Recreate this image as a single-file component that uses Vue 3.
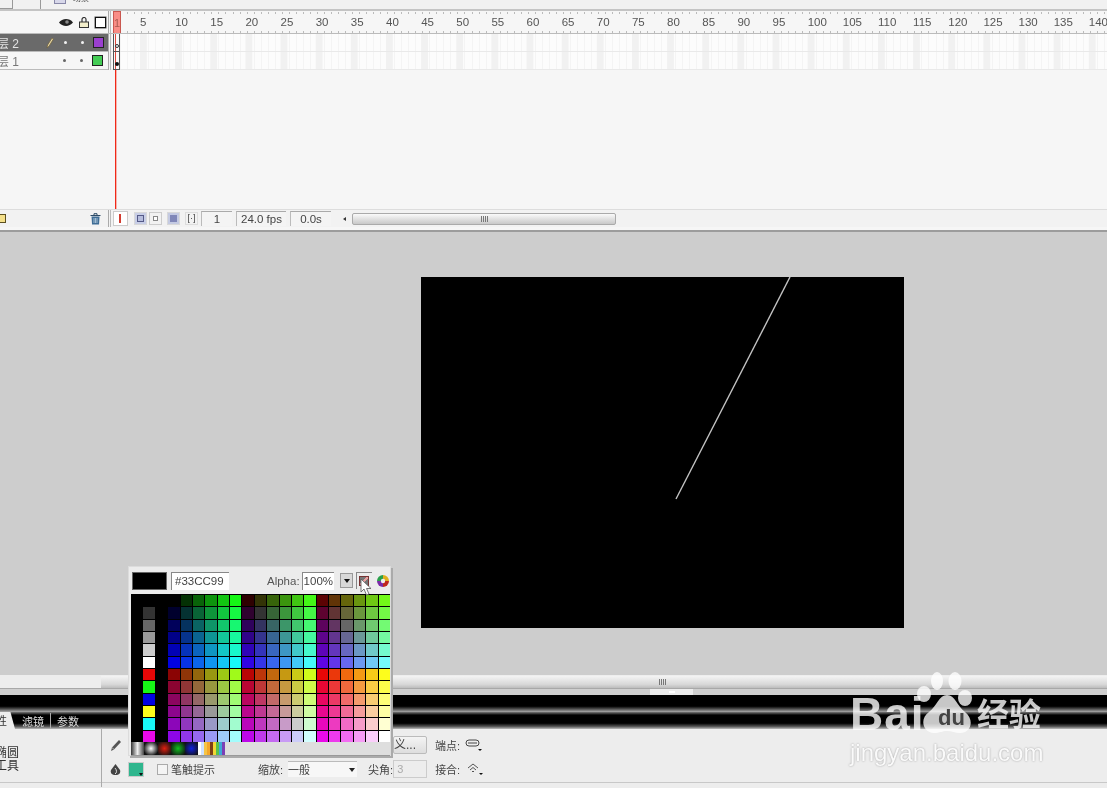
<script setup>
const labels = [5,10,15,20,25,30,35,40,45,50,55,60,65,70,75,80,85,90,95,100,105,110,115,120,125,130,135,140]
const levels = ['00','33','66','99','CC','FF']
const stripColors = ['#000000','#333333','#666666','#999999','#CCCCCC','#FFFFFF','#FF0000','#00FF00','#0000FF','#FFFF00','#00FFFF','#FF00FF']
const cells = []
for (let row = 0; row < 12; row++) {
  const half = row < 6 ? 0 : 3
  const blue = levels[row % 6]
  cells.push('#000000', stripColors[row], '#000000')
  for (let block = 0; block < 3; block++) {
    for (let g = 0; g < 6; g++) cells.push('#' + levels[block + half] + levels[g] + blue)
  }
}
const rainbow = ['#ffffff','#cfe2ff','#f6c445','#f4a62a','#7d3f16','#f1d635','#57c04a','#3fa7d6','#7b3fb5']
</script>

<template>
  <div class="app">
    <header class="topbar">
      <span class="tb-cell one"></span>
      <span class="tb-cell two"></span>
      <span class="scene-icon"></span>
      <span class="scene-text">场景</span>
    </header>

    <section class="timeline">
      <div class="tl-head">
        <div class="layers-head">
          <svg class="i-eye" viewBox="0 0 14 9"><path d="M0 4.500C3 .5 10 -.5 14 4.500 10 9.500 3 8.500 0 4.500Z" fill="#222"/><circle cx="8" cy="4" r="1.800" fill="#888"/></svg>
          <svg class="i-lock" viewBox="0 0 10 11"><path d="M3 5V2.500a2 2 0 0 1 4 0V5" fill="none" stroke="#333" stroke-width="1.200"/><rect x=".5" y="5" width="9" height="5.500" fill="#f3eecb" stroke="#333"/></svg>
          <span class="i-box"></span>
        </div>
        <div class="split"></div>
        <div class="ruler">
          <span class="head-marker">1</span>
          <span v-for="n in labels" :key="n" class="tick-label">{{ n }}</span>
        </div>
      </div>

      <div class="tl-rows">
        <div class="layers">
          <div class="layer selected">
            <span class="layer-name">层 2</span>
            <svg class="i-pencil" viewBox="0 0 8 12"><path d="M1 11 1.600 8 6 1l1.500 1-4.400 7Z" fill="#e9d9a6" stroke="#6b5d3a" stroke-width=".7"/></svg>
            <span class="dot d1"></span><span class="dot d2"></span>
            <span class="chip purple"></span>
          </div>
          <div class="layer">
            <span class="layer-name">层 1</span>
            <span class="dot d1 gap"></span><span class="dot d2"></span>
            <span class="chip green"></span>
          </div>
        </div>
        <div class="split"></div>
        <div class="frames">
          <div class="frame-row"><span class="kf hollow"></span></div>
          <div class="frame-row"><span class="kf solid"></span></div>
        </div>
      </div>

      <div class="tl-status">
        <div class="status-left">
          <span class="folder"></span>
          <svg class="i-trash" viewBox="0 0 11 12"><path d="M.5 2.500h10M4 2V.7h3V2" fill="none" stroke="#2c4a66"/><path d="M1.500 3.500h8L9 11.500H2Z" fill="#3f6d96"/><path d="M4 5v5M5.500 5v5M7 5v5" stroke="#cfe0ee" stroke-width=".7"/></svg>
        </div>
        <div class="split"></div>
        <div class="status-right">
          <span class="st-btn center"><i></i></span>
          <span class="st-btn onion a"></span>
          <span class="st-btn onion b"></span>
          <span class="st-btn onion c"></span>
          <span class="st-btn bracket">[·]</span>
          <span class="field f1">1</span>
          <span class="field f2">24.0 fps</span>
          <span class="field f3">0.0s</span>
          <span class="arrow-left"></span>
          <div class="h-scroll"><span class="grip"></span></div>
        </div>
      </div>
    </section>

    <main class="stage">
      <div class="canvas">
        <svg class="canvas-line" viewBox="0 0 483 351"><path d="M369 0 255 222" stroke="#c4c4c4" stroke-width="1.400" fill="none"/></svg>
      </div>
    </main>

    <div class="stage-scroll"><span class="grip"></span></div>
    <div class="collapse-strip"><span class="collapse-handle"><i></i></span></div>

    <div class="black-band"></div>
    <div class="black-band second">
      <div class="tabs">
        <span class="tab active">性</span>
        <span class="tab">滤镜</span>
        <span class="tab last">参数</span>
      </div>
    </div>

    <section class="props">
      <div class="tool-name"><span>椭圆</span><span>工具</span></div>
      <div class="prop-controls">
        <div class="prop-row top">
          <svg class="i-pen" viewBox="0 0 12 13"><path d="M1 12 2 8.500 9 1l2 2-7 7.500Z" fill="#555"/><path d="M2 8.500 4 10.500" stroke="#eee" stroke-width=".7"/></svg>
          <span class="custom-btn">义...</span>
          <span class="lab endcap">端点:</span>
          <svg class="i-cap" viewBox="0 0 18 12"><rect x="1" y="1" width="13" height="6" rx="3" fill="none" stroke="#444"/><path d="M3 4h9" stroke="#444"/><path d="M13 10h4l-2 2Z" fill="#111"/></svg>
        </div>
        <div class="prop-row bottom">
          <svg class="i-fill" viewBox="0 0 13 13"><path d="M6.500 1 11 7c1 3-1 5-4.500 5S1 10 2 7Z" fill="#444"/><path d="M6 5c2 2 2 5 0 6" stroke="#ddd" fill="none"/></svg>
          <span class="swatch"><i></i></span>
          <span class="check"></span>
          <span class="lab hint">笔触提示</span>
          <span class="lab scale">缩放:</span>
          <span class="select">一般<i></i></span>
          <span class="lab miter">尖角:</span>
          <span class="miter-input">3</span>
          <span class="lab join">接合:</span>
          <svg class="i-join" viewBox="0 0 18 14"><path d="M2 6 7 2l5 4M4 8l3-2.500L10 8M6 10l1-1 1 1" fill="none" stroke="#555"/><path d="M13 11h4l-2 2Z" fill="#111"/></svg>
        </div>
      </div>
    </section>

    <div class="picker">
      <div class="picker-top">
        <span class="current"></span>
        <span class="hex">#33CC99</span>
        <span class="alpha-label">Alpha:</span>
        <span class="alpha">100%</span>
        <span class="alpha-drop"><i></i></span>
        <span class="nofill"><b></b></span>
        <svg class="wheel" viewBox="0 0 12 12">
          <path d="M6 6 6 0A6 6 0 0 1 12 6Z" fill="#e0b020"/><path d="M6 6 12 6A6 6 0 0 1 6 12Z" fill="#c0281e"/>
          <path d="M6 6 6 12A6 6 0 0 1 0 6Z" fill="#7a2aa8"/><path d="M6 6 0 6A6 6 0 0 1 6 0Z" fill="#28a04a"/>
          <circle cx="6" cy="6" r="2.200" fill="#eee"/>
        </svg>
      </div>
      <div class="palette">
        <i v-for="(c, i) in cells" :key="i" :style="{ background: c }"></i>
      </div>
      <div class="gradients">
        <i class="g-gray"></i><i class="g-radial"></i><i class="g-red"></i><i class="g-green"></i><i class="g-blue"></i>
        <span class="g-rainbow"><b v-for="c in rainbow" :key="c" :style="{ background: c }"></b></span>
      </div>
    </div>
    <svg class="cursor" viewBox="0 0 12 18"><path d="M1 1v13l3-3 2.500 6 2.500-1-2.500-5.500H11Z" fill="#fff" stroke="#555" stroke-width=".8"/></svg>

    <div class="playhead"></div>

    <div class="watermark">
      <div class="wm-top">
        <span class="wm-bai">Bai</span>
        <svg class="wm-paw" viewBox="0 0 56 63">
          <ellipse cx="20" cy="10" rx="6" ry="9"/><ellipse cx="38" cy="10" rx="6.500" ry="9"/>
          <ellipse cx="7" cy="23" rx="7" ry="8"/><ellipse cx="48" cy="27" rx="7" ry="8"/>
          <path d="M30 24C22 24 20 35 12 41 2 48 6 62 17 62 23 62 25 60 30 60 35 60 38 62 43 62 54 62 58 49 48 41 40 35 38 24 30 24Z"/>
        </svg>
        <span class="wm-du">du</span>
        <span class="wm-cn">经验</span>
      </div>
      <div class="wm-url">jingyan.baidu.com</div>
    </div>
  </div>
</template>

<style scoped>
.app {
  position: relative;
  width: 1107px;
  height: 788px;
  overflow: hidden;
  display: flex;
  flex-direction: column;
  background: #ededed;
  font-family: "Liberation Sans", "Noto Sans CJK SC", sans-serif;
  color: #444;
  font-size: 11px;
  filter: blur(0.4px);
}

/* top strip */
.topbar {
  height: 9px;
  flex: none;
  display: flex;
  align-items: flex-end;
  background: #f1f1f1;
  border-bottom: 2px solid #c4c4c4;
  overflow: hidden;
}
.tb-cell { display: block; height: 9px; border-right: 1px solid #999; }
.tb-cell.one { width: 12px; border-bottom: 1px solid #999; }
.tb-cell.two { width: 27px; margin-right: 13px; }
.scene-icon { width: 10px; height: 4px; margin-bottom: 5px; background: #d8d8ea; border: 1px solid #8888a8; }
.scene-text { align-self: flex-start; margin: -7px 0 0 7px; font-size: 8px; line-height: 11px; }

/* timeline */
.timeline { height: 219px; flex: none; display: flex; flex-direction: column; background: #f6f6f6; border-bottom: 2px solid #9c9c9c; }
.tl-head { height: 22px; flex: none; display: flex; border-bottom: 1px solid #bbb; }
.layers-head { width: 108px; flex: none; display: flex; align-items: center; }
.i-eye { width: 14px; height: 9px; margin-left: 59px; }
.i-lock { width: 10px; height: 11px; margin-left: 6px; }
.i-box { width: 9px; height: 9px; margin-left: 6px; border: 1px solid #111; background: #fff; box-shadow: 0 0 0 .5px #555; }
.split { width: 3px; flex: none; box-sizing: border-box; border-left: 1px solid #aaa; border-right: 1px solid #bbb; background: #f2f2f2; }
.ruler {
  flex: 1;
  display: flex;
  overflow: hidden;
  position: relative;
  padding-left: 29px;
  background-image:
    repeating-linear-gradient(90deg, #bbb 0 1px, transparent 1px 7.03px),
    repeating-linear-gradient(90deg, #bbb 0 1px, transparent 1px 7.03px);
  background-size: 100% 2px, 100% 2px;
  background-position: 2px 1px, 2px bottom;
  background-repeat: no-repeat;
}
.head-marker {
  position: absolute;
  left: 2px;
  top: 0;
  width: 6px;
  height: 21px;
  background: #f98d86;
  border: 1px solid #c9574f;
  color: #a85a50;
  font-size: 11px;
  line-height: 22px;
  text-align: center;
}
.tick-label { flex: 0 0 35.15px; font-size: 11.500px; line-height: 23px; color: #555; white-space: nowrap; }

.tl-rows { flex: none; height: 36px; display: flex; position: relative; }
.layers { width: 108px; flex: none; }
.layer { height: 18px; position: relative; display: flex; align-items: center; border-bottom: 1px solid #bbb; box-sizing: border-box; color: #777; }
.layer.selected { background: #6a6a6a; color: #e4e4e4; }
.layer-name { margin-left: -3px; font-size: 12px; width: 49px; white-space: nowrap; }
.i-pencil { width: 8px; height: 12px; }
.dot { width: 3px; height: 3px; border-radius: 50%; background: #666; }
.selected .dot { background: #f2f2f2; }
.dot.d1 { margin-left: 10px; }
.dot.gap { margin-left: 17px; }
.dot.d2 { margin-left: 14px; }
.chip { width: 9px; height: 9px; margin-left: 9px; border: 1px solid #222; }
.chip.purple { background: #9a3fcf; }
.chip.green { background: #44cc55; }
.frames { flex: 1; position: relative; overflow: hidden; }
.frame-row {
  height: 18px;
  box-sizing: border-box;
  border-bottom: 1px solid #e9e9e9;
  background-color: #fcfcfc;
  background-image:
    linear-gradient(90deg, #f1f1f1 0 7px, transparent 7px),
    repeating-linear-gradient(90deg, #f4f4f4 0 1px, transparent 1px 7.03px);
  background-size: 35.15px 100%, 100% 100%;
  background-position: 29px 0, 2px 0;
  position: relative;
}
.kf {
  position: absolute;
  left: 2px;
  top: 0;
  width: 5px;
  height: 17px;
  background: #fafafa linear-gradient(90deg, transparent 1px, #e0483c 1px 2px, transparent 2px);
  border: 1px solid #555;
  border-top: 0;
}
.kf::after { content: ""; position: absolute; left: .5px; top: 10px; width: 4px; height: 4px; border-radius: 50%; box-sizing: border-box; }
.kf.hollow::after { border: 1px solid #333; background: #fff; }
.kf.solid::after { background: #111; }

.tl-status { flex: none; height: 17px; display: flex; background: #f2f2f2; border-top: 1px solid #ddd; margin-top: 139px; }
.status-left { width: 108px; flex: none; display: flex; align-items: center; justify-content: space-between; padding-right: 7px; box-sizing: border-box; }
.folder { width: 5px; height: 7px; background: #f5e08a; border: 1px solid #5c5020; border-left: 0; }
.i-trash { width: 11px; height: 12px; }
.status-right { flex: 1; display: flex; align-items: center; }
.st-btn { flex: none; display: block; width: 13px; height: 13px; position: relative; box-sizing: border-box; }
.st-btn.center { width: 15px; height: 15px; margin-left: 2px; border: 1px solid #ccc; background: #fff; }
.st-btn.center i { position: absolute; left: 5px; top: 2px; width: 2px; height: 9px; background: #d23c30; }
.onion.a { margin-left: 6px; background: #b6bddd; border: 1px solid #d8d8d8; box-shadow: inset 0 0 0 2px #c8cee6, inset 0 0 0 3px #555a88; }
.onion.b { margin-left: 2px; background: #fff; border: 1px solid #ccc; box-shadow: inset 0 0 0 3px #f2f2f2, inset 0 0 0 4px #888; }
.onion.c { margin-left: 5px; background: #8087b8; border: 1px solid #d8d8d8; box-shadow: inset 0 0 0 2px #c4cae2; }
.bracket { margin-left: 5px; border: 1px solid #ddd; font-size: 9px; line-height: 11px; text-align: center; color: #444; white-space: nowrap; }
.field { flex: none; height: 15px; box-sizing: border-box; background: #f4f4f4; border-top: 1px solid #aaa; border-left: 1px solid #bbb; font-size: 11.500px; line-height: 14px; text-align: center; color: #444; }
.f1 { width: 31px; margin-left: 3px; }
.f2 { width: 50px; margin-left: 4px; }
.f3 { width: 41px; margin-left: 4px; }
.arrow-left { flex: none; width: 0; height: 0; margin-left: 12px; border: 2.500px solid transparent; border-right: 3px solid #333; border-left: 0; }
.h-scroll { flex: none; width: 264px; height: 12px; margin-left: 6px; display: flex; align-items: center; justify-content: center; box-sizing: border-box; border: 1px solid #aaa; border-radius: 2px; background: linear-gradient(#fafafa, #dcdcdc 60%, #c8c8c8); }
.grip { display: block; width: 7px; height: 6px; background: repeating-linear-gradient(90deg, #777 0 1px, transparent 1px 2px); }

/* stage */
.stage { height: 443px; flex: none; background: #cdcdcd; display: flex; align-items: flex-start; padding: 45px 0 0 421px; box-sizing: border-box; }
.canvas { width: 483px; height: 351px; background: #000; }
.canvas-line { display: block; width: 483px; height: 351px; }

.stage-scroll { height: 13px; flex: none; margin-left: 101px; display: flex; align-items: center; justify-content: center; padding-left: 116px; background: linear-gradient(#f4f4f4, #d8d8d8 70%, #bdbdbd); border-top: 1px solid #eee; box-sizing: border-box; }
.collapse-strip { height: 7px; flex: none; background: #cfcfcf; border-top: 1px solid #a8a8a8; box-sizing: border-box; display: flex; justify-content: flex-start; padding-left: 650px; }
.collapse-handle { width: 43px; height: 6px; background: #ececec; display: flex; justify-content: center; align-items: center; }
.collapse-handle i { width: 6px; height: 2px; background: #fff; }
.black-band { height: 17px; flex: none; background: linear-gradient(#000 0 66%, #444 80%, #aaa 100%); }
.black-band.second { height: 17px; background: linear-gradient(#777, #000 18% 66%, #555 85%, #bbb); position: relative; }
.tabs { display: flex; height: 17px; align-items: center; color: #ddd; font-size: 11px; }
.tab { padding: 0 6px; }
.tab.active { width: 19px; height: 17px; padding: 0; box-sizing: border-box; background: #ededed; color: #333; clip-path: polygon(0 0, 76% 0, 100% 100%, 0 100%); margin: 0 7px 0 -4px; line-height: 19px; }
.tab:not(.active):not(.last) { border-right: 1px solid #aaa; padding: 0 6px 0 0; }

/* property inspector */
.props { flex: 1; display: flex; position: relative; border-bottom: 1px solid #c8c8c8; margin-bottom: 5px; }
.tool-name { width: 107px; flex: none; display: flex; flex-direction: column; padding-top: 18px; margin-left: -5px; box-sizing: border-box; border-right: 1px solid #aaa; font-size: 12px; line-height: 13px; color: #333; margin-bottom: -5px; white-space: nowrap; }
.prop-controls { flex: 1; display: flex; flex-direction: column; }
.prop-row { display: flex; align-items: center; height: 24px; flex: none; }
.prop-row.top { margin-top: 4px; }
.i-pen { width: 12px; height: 13px; margin-left: 8px; flex: none; }
.custom-btn { flex: none; width: 34px; height: 18px; margin-left: 271px; box-sizing: border-box; border: 1px solid #bbb; border-radius: 2px; background: linear-gradient(#f4f4f4, #ddd); line-height: 16px; color: #444; font-size: 12px; }
.lab { flex: none; font-size: 11px; color: #444; white-space: nowrap; }
.endcap { margin-left: 8px; }
.i-cap { width: 18px; height: 12px; margin-left: 5px; flex: none; }
.i-fill { width: 13px; height: 13px; margin-left: 7px; flex: none; }
.swatch { flex: none; width: 16px; height: 15px; margin-left: 6px; background: #2fb68e; border: 1px solid #ccc; box-sizing: border-box; position: relative; }
.swatch i { position: absolute; right: 0; bottom: 0; border: 2.500px solid transparent; border-top: 3px solid #111; border-bottom: 0; }
.check { flex: none; width: 11px; height: 11px; margin-left: 13px; background: #f4f4f4; border: 1px solid #aaa; box-sizing: border-box; }
.hint { margin-left: 3px; }
.scale { margin-left: 43px; }
.select { flex: none; width: 69px; height: 16px; margin-left: 5px; position: relative; line-height: 16px; font-size: 11px; background: #f7f7f7; border-top: 1px solid #bbb; box-sizing: border-box; }
.select i { position: absolute; right: 2px; top: 6px; border: 3.500px solid transparent; border-top: 4px solid #222; border-bottom: 0; }
.miter { margin-left: 11px; }
.miter-input { flex: none; width: 34px; height: 18px; margin-left: 0; box-sizing: border-box; padding-left: 3px; border: 1px solid #ccc; color: #aaa; line-height: 16px; }
.join { margin-left: 8px; }
.i-join { width: 18px; height: 14px; margin-left: 6px; flex: none; }

/* colour picker popup */
.picker {
  position: absolute;
  left: 128px;
  top: 566px;
  width: 263px;
  height: 190px;
  box-sizing: border-box;
  padding: 0 0 0 2px;
  background: #ececec;
  border: 1px solid #dcdcdc;
  box-shadow: 2px 2px 0 #aaa;
}
.picker-top { height: 27px; display: flex; align-items: center; padding-left: 1px; }
.current { flex: none; width: 35px; height: 18px; background: #000; border: 1px solid #666; box-sizing: border-box; }
.hex { flex: none; width: 58px; height: 18px; margin-left: 4px; background: #fff; border-top: 1px solid #888; border-left: 1px solid #888; box-sizing: border-box; padding-left: 3px; line-height: 17px; font-size: 11.500px; color: #444; }
.alpha-label { flex: none; margin-left: 38px; font-size: 11.500px; color: #555; }
.alpha { flex: none; width: 32px; height: 18px; margin-left: 2px; background: #fff; border-top: 1px solid #888; border-left: 1px solid #888; box-sizing: border-box; line-height: 17px; font-size: 11.500px; color: #444; padding-left: 1px; white-space: nowrap; overflow: hidden; }
.alpha-drop { flex: none; width: 13px; height: 15px; margin-left: 6px; background: #d8d8d8; border: 1px solid #999; box-sizing: border-box; position: relative; }
.alpha-drop i { position: absolute; left: 3px; top: 5px; border: 3px solid transparent; border-top: 4px solid #111; border-bottom: 0; }
.nofill { flex: none; width: 16px; height: 17px; margin-left: 3px; border-top: 1px solid #888; border-left: 1px solid #888; box-sizing: border-box; display: flex; align-items: center; justify-content: center; }
.nofill b { display: block; width: 8px; height: 8px; background: linear-gradient(135deg, #777 0 40%, #e8a0a0 40% 60%, #777 60%); border: 1px solid #733; }
.wheel { flex: none; width: 12px; height: 12px; margin-left: 5px; }
.palette {
  display: grid;
  grid-template-columns: repeat(21, 1fr);
  grid-auto-rows: 1fr;
  gap: 1px;
  width: 259px;
  height: 148px;
  padding: 1px 0 0 0;
  box-sizing: border-box;
  background: #000;
  filter: saturate(.88);
}
.palette i { display: block; }
.gradients { height: 13px; width: 259px; display: flex; background: #dedede; border-bottom: 1px solid #999; }
.gradients i { width: 13.400px; flex: none; display: block; }
.g-gray { background: linear-gradient(90deg, #333, #eee 50%, #444); }
.g-radial { background: radial-gradient(circle, #fff, #111 80%); }
.g-red { background: radial-gradient(circle, #e02010, #111 90%); }
.g-green { background: radial-gradient(circle, #10c020, #111 90%); }
.g-blue { background: radial-gradient(circle, #1020e0, #111 90%); }
.g-rainbow { display: flex; flex: none; }
.g-rainbow b { display: block; width: 3px; height: 13px; }

.cursor { position: absolute; left: 360px; top: 578px; width: 12px; height: 18px; }

.playhead { position: absolute; left: 115px; top: 70px; width: 1px; height: 139px; background: #f02818; box-shadow: 1px 0 0 #f6b4ae; }

/* watermark */
.watermark { position: absolute; left: 850px; top: 670px; width: 200px; color: rgba(255, 255, 255, .78); }
.wm-top { display: flex; align-items: flex-end; height: 64px; position: relative; }
.wm-bai { flex: none; width: 67px; font-size: 46px; font-weight: 700; line-height: 46px; margin-bottom: -3px; letter-spacing: 1px; white-space: nowrap; }
.wm-paw { flex: none; width: 56px; height: 63px; fill: rgba(255, 255, 255, .78); }
.wm-du { position: absolute; left: 88px; top: 37px; font-size: 22px; line-height: 22px; font-weight: 700; color: #444; }
.wm-cn { flex: none; margin-left: 4px; font-size: 32px; font-weight: 700; line-height: 38px; margin-bottom: 3px; font-family: "Noto Sans CJK SC", sans-serif; }
.wm-url { font-size: 24px; line-height: 28px; margin-top: 5px; color: #fafafa; text-shadow: 0 0 2px #999; white-space: nowrap; }
</style>
